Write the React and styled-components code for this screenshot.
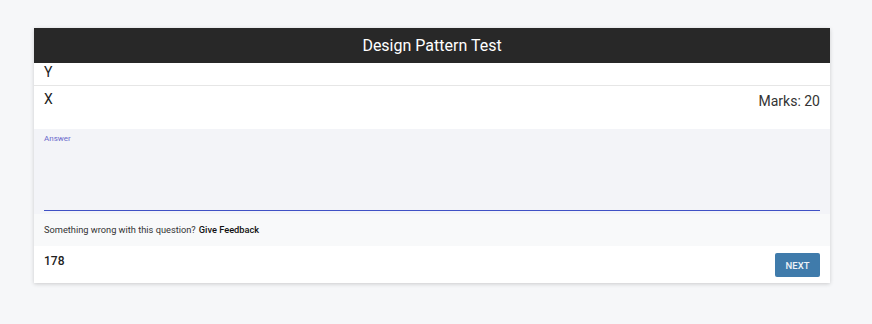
import React from 'react';
import styled, { createGlobalStyle } from 'styled-components';

const Global = createGlobalStyle`
  html, body { margin: 0; padding: 0; }
  body {
    background: #f6f7f9;
    font-family: Roboto, 'Liberation Sans', sans-serif;
    color: #212121;
  }
`;

const Page = styled.div`
  padding: 28px 42px 40px 34px;
`;

const Card = styled.div`
  width: 796px;
  background: #fff;
  box-shadow: 0 1px 4px rgba(0, 0, 0, 0.18);
`;

const Header = styled.div`
  height: 35px;
  background: #282828;
  color: #fff;
  display: flex;
  align-items: center;
  justify-content: center;
  font-size: 16px;
`;

const Option = styled.div`
  padding: ${(p) => p.$pad};
  min-height: ${(p) => p.$h}px;
  box-sizing: border-box;
  border-bottom: ${(p) => (p.$border ? '1px solid #e6e6e6' : 'none')};
  display: flex;
  justify-content: space-between;
  font-size: 14px;
  line-height: 16px;
`;

const Marks = styled.span`
  align-self: flex-end;
  margin-bottom: 20px;
  font-size: 14px;
  color: #333;
`;

const AnswerBox = styled.div`
  background: #f3f4f8;
  padding: 5px 10px 3px 10px;
`;

const AnswerLabel = styled.div`
  font-size: 8px;
  line-height: 10px;
  color: #6a6acc;
`;

const AnswerField = styled.div`
  height: 66px;
  border-bottom: 1px solid #3f51c5;
`;

const Feedback = styled.div`
  background: #f8f9fa;
  height: 32px;
  display: flex;
  align-items: center;
  padding: 0 10px 2px;
  box-sizing: border-box;
  font-size: 9.25px;
  color: #333;

  b {
    margin-left: 3px;
    font-weight: 500;
    color: #111;
  }
`;

const Footer = styled.div`
  height: 37px;
  display: flex;
  justify-content: space-between;
  align-items: center;
  padding: 0 10px;
`;

const Count = styled.span`
  font-size: 12px;
  font-weight: 500;
  margin-top: -8px;
`;

const NextButton = styled.button`
  width: 45px;
  height: 24px;
  border: none;
  border-radius: 2px;
  background: #3f7bab;
  color: #eef3f8;
  font-family: Roboto, 'Liberation Sans', sans-serif;
  font-size: 9.5px;
  font-weight: 500;
  padding: 0;
  margin-top: 1px;
`;

export default function App() {
  return (
    <>
      <Global />
      <Page>
        <Card>
          <Header>Design Pattern Test</Header>
          <Option $pad="1px 10px 0" $h={23} $border>
            Y
          </Option>
          <Option $pad="5px 10px 0" $h={43}>
            <span>X</span>
            <Marks>Marks: 20</Marks>
          </Option>
          <AnswerBox>
            <AnswerLabel>Answer</AnswerLabel>
            <AnswerField />
          </AnswerBox>
          <Feedback>
            Something wrong with this question?<b>Give Feedback</b>
          </Feedback>
          <Footer>
            <Count>178</Count>
            <NextButton>NEXT</NextButton>
          </Footer>
        </Card>
      </Page>
    </>
  );
}
